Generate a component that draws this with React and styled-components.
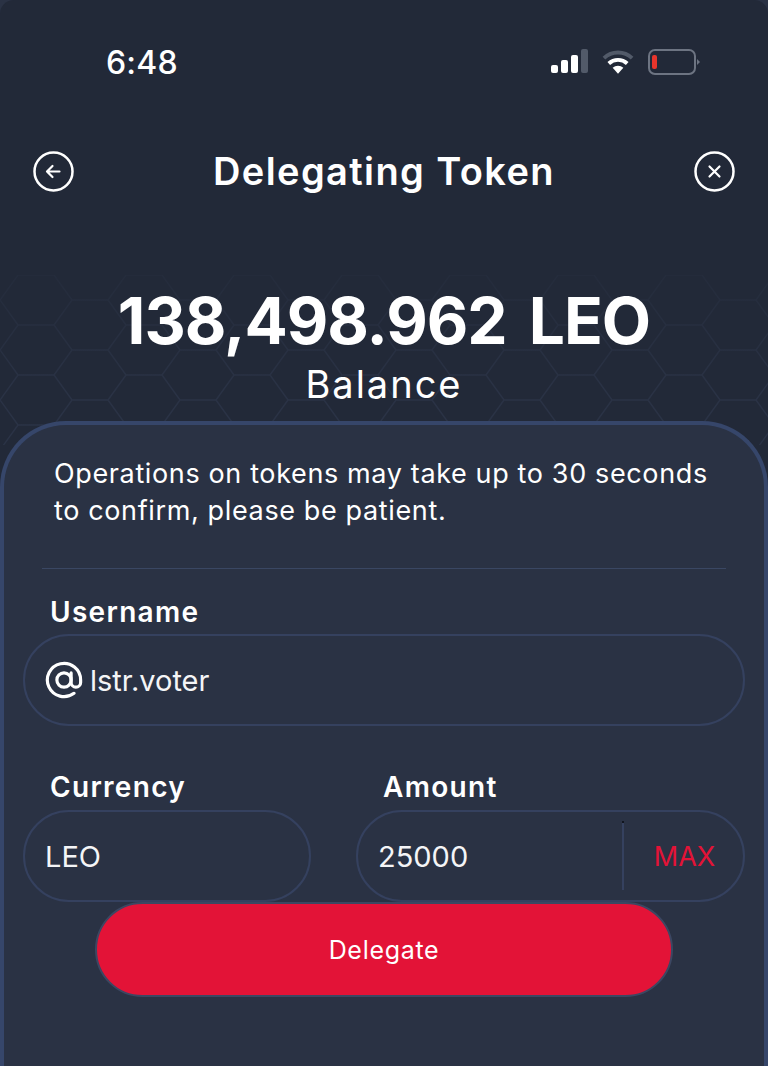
import React from "react";
import styled, { createGlobalStyle } from "styled-components";

const GlobalStyle = createGlobalStyle`
  html, body {
    margin: 0;
    padding: 0;
    background: #2a3244;
  }
  * {
    box-sizing: border-box;
  }
`;

const sans = `"Inter", "Noto Sans", sans-serif`;

const Screen = styled.div`
  position: relative;
  width: 768px;
  height: 1066px;
  overflow: hidden;
  background: #222938;
  border-radius: 14px 14px 0 0;
  color: #fff;
  font-family: ${sans};
`;

const HexLayer = styled.svg`
  position: absolute;
  left: 0;
  top: 275px;
  width: 768px;
  height: 170px;
`;

const Content = styled.div`
  position: relative;
  display: flex;
  flex-direction: column;
  height: 100%;
`;

const StatusBar = styled.div`
  display: flex;
  align-items: center;
  justify-content: space-between;
  height: 40px;
  margin-top: 42px;
  padding: 0 68px 0 106px;
`;

const Clock = styled.span`
  font-size: 32px;
  font-weight: 500;
  letter-spacing: 0.2px;
`;

const StatusIcons = styled.div`
  display: flex;
  align-items: center;
  gap: 14px;
`;

const Header = styled.header`
  display: flex;
  align-items: center;
  justify-content: space-between;
  height: 42px;
  margin-top: 68px;
  padding: 0 33px;
`;

const Title = styled.h1`
  margin: 0;
  font-size: 38px;
  font-weight: 600;
  letter-spacing: 1.4px;
`;

const RoundIcon = styled.svg`
  width: 41px;
  height: 41px;
  display: block;
`;

const BalanceBlock = styled.div`
  display: flex;
  flex-direction: column;
  align-items: center;
  margin-top: 93px;
  height: 135px;
`;

const BalanceValue = styled.div`
  font-size: 64px;
  line-height: 72px;
  font-weight: 700;
  letter-spacing: -1px;
  word-spacing: 8px;
`;

const BalanceLabel = styled.div`
  font-size: 38px;
  line-height: 44px;
  font-weight: 400;
  letter-spacing: 2px;
  margin-top: 5px;
`;

const Panel = styled.section`
  flex: 1;
  margin-top: 1px;
  padding: 30px 19px 0;
  background: #2a3244;
  border: 4px solid #36466a;
  border-bottom: none;
  border-radius: 66px 66px 0 0;
`;

const Notice = styled.p`
  margin: 0 0 0 31px;
  font-size: 27px;
  line-height: 37px;
  font-weight: 400;
  letter-spacing: 0.63px;
  white-space: nowrap;
`;

const Divider = styled.hr`
  margin: 39px 0 0 19px;
  width: 684px;
  border: 0;
  border-top: 1px solid #3a4763;
`;

const Label = styled.label`
  display: block;
  padding-left: 27px;
  font-size: 28px;
  line-height: 34px;
  font-weight: 600;
  letter-spacing: 1.3px;
`;

const UsernameLabel = styled(Label)`
  margin-top: 26px;
`;

const Field = styled.div`
  display: flex;
  align-items: center;
  height: 92px;
  margin-top: ${(p) => p.$top}px;
  padding-left: 20px;
  border: 2px solid #35415f;
  border-radius: 46px;
  font-size: 29px;
  font-weight: 400;
  color: #f4f5f7;
`;

const AtIcon = styled.svg`
  width: 38px;
  height: 38px;
  margin-right: 7px;
`;

const Columns = styled.div`
  display: flex;
  gap: 45px;
  margin-top: 44px;
`;

const Column = styled.div`
  width: ${(p) => p.$width}px;
`;

const ValueText = styled.span`
  flex: 1;
`;

const MaxButton = styled.div`
  position: relative;
  align-self: stretch;
  width: 121px;
  display: flex;
  align-items: center;
  justify-content: center;
  margin: 10px 0;
  border-left: 2px solid #35415f;
  color: #e31337;
  font-size: 27px;
  padding-left: 2px;

  &::before {
    content: "";
    position: absolute;
    left: -2px;
    top: -1px;
    width: 2px;
    height: 2px;
    background: #11151f;
  }
`;

const SubmitRow = styled.div`
  display: flex;
  justify-content: center;
`;

const SubmitButton = styled.button`
  width: 578px;
  height: 95px;
  border: 2px solid #3c4762;
  border-radius: 48px;
  background: #e31337;
  color: #fff;
  font-family: ${sans};
  font-size: 25px;
  font-weight: 400;
  letter-spacing: 0.7px;
`;

// flat-top hex mesh behind the balance, fades out towards the top
const hexCells = () => {
  const cells = [];
  const w = 72;
  const h = 50;
  const step = w * 0.75;
  for (let c = -1; c < 16; c++) {
    for (let r = -1; r < 5; r++) {
      const x = c * step;
      const y = r * h + (c % 2 ? h / 2 : 0);
      cells.push(
        `M${x} ${y + h / 2}L${x + w / 4} ${y}L${x + (w * 3) / 4} ${y}L${x + w} ${y + h / 2}L${x + (w * 3) / 4} ${y + h}L${x + w / 4} ${y + h}Z`
      );
    }
  }
  return cells.join("");
};

const App = () => {
  return (
    <>
      <GlobalStyle />
      <Screen>
        <HexLayer viewBox="0 0 768 170">
          <defs>
            <linearGradient id="hexFade" x1="0" y1="0" x2="0" y2="1">
              <stop offset="0" stopColor="#3a4560" stopOpacity="0" />
              <stop offset="0.5" stopColor="#3a4560" stopOpacity="0.32" />
              <stop offset="1" stopColor="#3a4560" stopOpacity="0.42" />
            </linearGradient>
          </defs>
          <path d={hexCells()} fill="none" stroke="url(#hexFade)" strokeWidth="1.3" />
        </HexLayer>
        <Content>
          <StatusBar>
            <Clock>6:48</Clock>
            <StatusIcons>
              <svg width="37" height="26" viewBox="0 0 37 26">
                <rect x="0" y="16" width="7" height="8" rx="2" fill="#fff" />
                <rect x="10" y="11" width="7" height="13" rx="2" fill="#fff" />
                <rect x="20" y="6" width="7" height="18" rx="2" fill="#fff" />
                <rect x="30" y="0" width="7" height="24" rx="2" fill="#525a69" />
              </svg>
              <svg width="32" height="26" viewBox="0 0 33 26">
                <path d="M2 9a21 21 0 0 1 29 0" fill="none" stroke="#525a69" strokeWidth="4" />
                <path d="M7 14.500a14 14 0 0 1 19 0" fill="none" stroke="#fff" strokeWidth="4" />
                <path d="M11 19a8 8 0 0 1 11 0l-5.500 6z" fill="#fff" />
              </svg>
              <svg width="52" height="26" viewBox="0 0 52 26">
                <rect x="1" y="1" width="46" height="24" rx="6" fill="none" stroke="#6d7482" strokeWidth="2" />
                <rect x="4" y="6" width="5" height="14" rx="2" fill="#e8352c" />
                <path d="M49 10l3 3l-3 3z" fill="#6d7482" />
              </svg>
            </StatusIcons>
          </StatusBar>
          <Header>
            <RoundIcon viewBox="0 0 41 41" fill="none" stroke="#fff" strokeWidth="2.500">
              <circle cx="20.500" cy="20.500" r="19" />
              <path d="M26.500 20.500H14.500M19.500 15l-5.500 5.500l5.500 5.500" strokeWidth="2.200" strokeLinecap="round" strokeLinejoin="round" />
            </RoundIcon>
            <Title>Delegating Token</Title>
            <RoundIcon viewBox="0 0 41 41" fill="none" stroke="#fff" strokeWidth="2.500">
              <circle cx="20.500" cy="20.500" r="19" />
              <path d="M15.500 15.500l10 10M25.500 15.500l-10 10" strokeWidth="2.200" strokeLinecap="round" />
            </RoundIcon>
          </Header>
          <BalanceBlock>
            <BalanceValue>138,498.962 LEO</BalanceValue>
            <BalanceLabel>Balance</BalanceLabel>
          </BalanceBlock>
          <Panel>
            <Notice>
              Operations on tokens may take up to 30 seconds
              <br />
              to confirm, please be patient.
            </Notice>
            <Divider />
            <UsernameLabel>Username</UsernameLabel>
            <Field $top={5}>
              <AtIcon viewBox="0 0 24 24" fill="none" stroke="#fff" strokeWidth="2" strokeLinecap="round">
                <circle cx="12" cy="12" r="4.500" />
                <path d="M16.500 7.500v6a3 3 0 0 0 6 0V12a10.500 10.500 0 1 0-4.200 8.400" />
              </AtIcon>
              lstr.voter
            </Field>
            <Columns>
              <Column $width={288}>
                <Label>Currency</Label>
                <Field $top={6}>LEO</Field>
              </Column>
              <Column $width={389}>
                <Label>Amount</Label>
                <Field $top={6}>
                  <ValueText>25000</ValueText>
                  <MaxButton>MAX</MaxButton>
                </Field>
              </Column>
            </Columns>
            <SubmitRow>
              <SubmitButton>Delegate</SubmitButton>
            </SubmitRow>
          </Panel>
        </Content>
      </Screen>
    </>
  );
};

export default App;
